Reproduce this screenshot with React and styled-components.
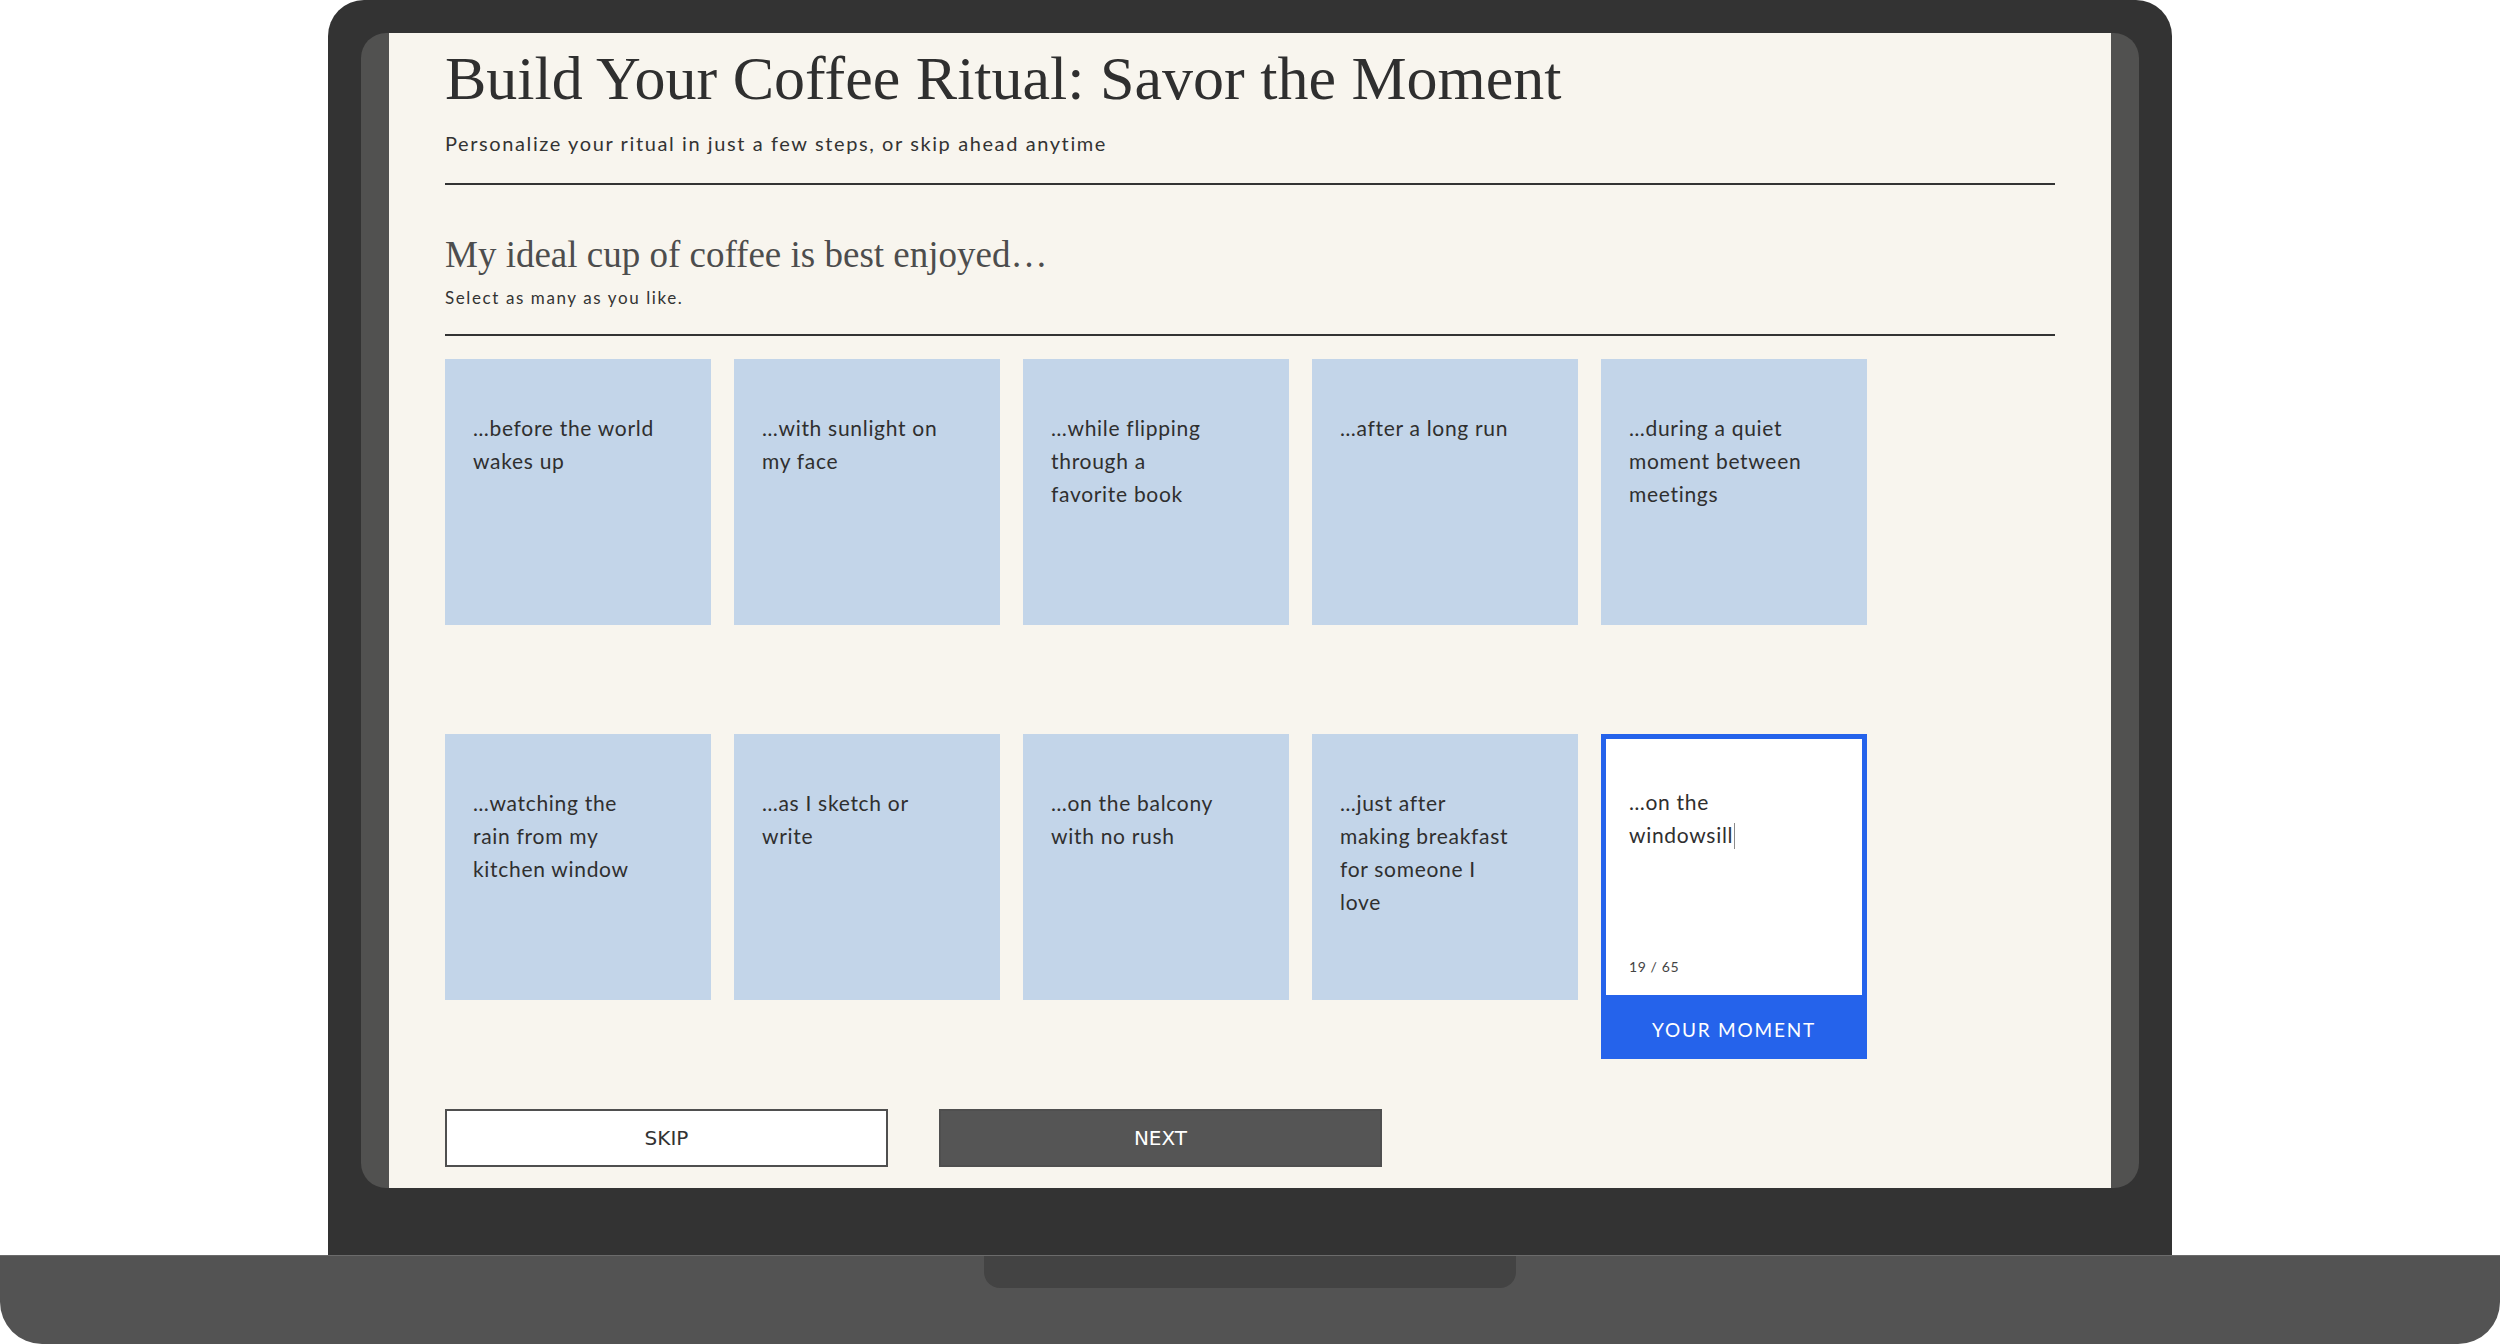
import React from "react";
import styled, { createGlobalStyle } from "styled-components";

const GlobalStyle = createGlobalStyle`
  *, *::before, *::after {
    box-sizing: border-box;
  }

  body {
    margin: 0;
    background: #ffffff;
    font-family: "Lato", "Noto Sans", sans-serif;
  }
`;

const Stage = styled.div`
  width: 2500px;
  height: 1344px;
  display: flex;
  flex-direction: column;
  align-items: center;
  overflow: hidden;
`;

const Lid = styled.div`
  width: 1844px;
  height: 1255px;
  flex: none;
  background: #333333;
  border-radius: 36px 36px 0 0;
  padding: 33px 33px 67px;
`;

const Screen = styled.div`
  height: 100%;
  background: #515150;
  border-radius: 25px;
  padding: 0 28px;
`;

const Page = styled.main`
  height: 100%;
  overflow: hidden;
  background: #f8f5ee;
  padding: 8px 56px 0;
  color: #333333;
`;

const Title = styled.h1`
  margin: 0;
  font-family: "Liberation Serif", serif;
  font-weight: 400;
  font-size: 62px;
  line-height: 74px;
  color: #2f2f2f;
`;

const Subtitle = styled.p`
  margin: 14px 0 0;
  font-size: 20px;
  line-height: 28px;
  letter-spacing: 1.6px;
  color: #333333;
`;

const Rule = styled.hr`
  margin: ${(p) => p.$gap}px 0 0;
  border: 0;
  height: 2px;
  background: #333333;
`;

const Question = styled.h2`
  margin: 48px 0 0;
  font-family: "Liberation Serif", serif;
  font-weight: 400;
  font-size: 37px;
  line-height: 44px;
  color: #4d4d4d;
`;

const Hint = styled.p`
  margin: 10px 0 0;
  font-size: 17px;
  line-height: 22px;
  letter-spacing: 1.6px;
  color: #333333;
`;

const Grid = styled.div`
  margin-top: 23px;
  display: grid;
  grid-template-columns: repeat(5, 266px);
  column-gap: 23px;
  row-gap: 109px;
  align-items: start;
`;

const Card = styled.div`
  height: 266px;
  background: #c3d5e9;
  padding: 52px 28px 0;
  font-size: 21px;
  line-height: 33px;
  letter-spacing: 0.7px;
  white-space: pre-line;
  color: #2f2f2f;
`;

const CustomCard = styled.div`
  display: flex;
  flex-direction: column;
  background: #2563eb;
  padding: 5px 5px 0;
`;

const Entry = styled.div`
  height: 256px;
  background: #ffffff;
  padding: 46px 23px 19px;
  display: flex;
  flex-direction: column;
  justify-content: space-between;
`;

const EntryText = styled.div`
  font-size: 21px;
  line-height: 33px;
  letter-spacing: 0.7px;
  white-space: pre-line;
  color: #2f2f2f;
`;

const Caret = styled.span`
  display: inline-block;
  width: 1px;
  height: 26px;
  margin-left: 1px;
  vertical-align: -6px;
  background: #8a8a8a;
`;

const Counter = styled.div`
  font-size: 14px;
  line-height: 18px;
  letter-spacing: 0.6px;
  color: #444444;
`;

const MomentLabel = styled.div`
  height: 64px;
  display: flex;
  align-items: center;
  justify-content: center;
  padding-top: 4px;
  color: #ffffff;
  font-size: 19px;
  letter-spacing: 1.8px;
`;

const Actions = styled.div`
  margin-top: 50px;
  display: flex;
  gap: 51px;
`;

const Button = styled.button`
  width: 443px;
  height: 58px;
  border: 2px solid #4f4f4f;
  background: ${(p) => (p.$primary ? "#555555" : "#ffffff")};
  color: ${(p) => (p.$primary ? "#ffffff" : "#333333")};
  font-family: "DejaVu Sans", sans-serif;
  font-size: 20px;
  cursor: pointer;
`;

const Base = styled.div`
  width: 100%;
  height: 89px;
  flex: none;
  background: #535353;
  border-top: 1px solid #6b6b6b;
  border-radius: 0 0 42px 42px;
  display: flex;
  justify-content: center;
`;

const Notch = styled.div`
  width: 532px;
  height: 32px;
  background: #434343;
  border-radius: 0 0 16px 16px;
`;

const moments = [
  "…before the world\nwakes up",
  "…with sunlight on\nmy face",
  "…while flipping\nthrough a\nfavorite book",
  "…after a long run",
  "…during a quiet\nmoment between\nmeetings",
  "…watching the\nrain from my\nkitchen window",
  "…as I sketch or\nwrite",
  "…on the balcony\nwith no rush",
  "…just after\nmaking breakfast\nfor someone I\nlove",
];

const custom = "…on the\nwindowsill";

const App = () => {
  return (
    <Stage>
      <GlobalStyle />
      <Lid>
        <Screen>
          <Page>
            <Title>Build Your Coffee Ritual: Savor the Moment</Title>
            <Subtitle>
              Personalize your ritual in just a few steps, or skip ahead anytime
            </Subtitle>
            <Rule $gap={26} />

            <Question>My ideal cup of coffee is best enjoyed…</Question>
            <Hint>Select as many as you like.</Hint>
            <Rule $gap={25} />

            <Grid>
              {moments.map((text) => (
                <Card key={text}>{text}</Card>
              ))}
              <CustomCard>
                <Entry>
                  <EntryText>
                    {custom}
                    <Caret />
                  </EntryText>
                  <Counter>19 / 65</Counter>
                </Entry>
                <MomentLabel>YOUR MOMENT</MomentLabel>
              </CustomCard>
            </Grid>

            <Actions>
              <Button>SKIP</Button>
              <Button $primary>NEXT</Button>
            </Actions>
          </Page>
        </Screen>
      </Lid>
      <Base>
        <Notch />
      </Base>
    </Stage>
  );
};

export default App;
